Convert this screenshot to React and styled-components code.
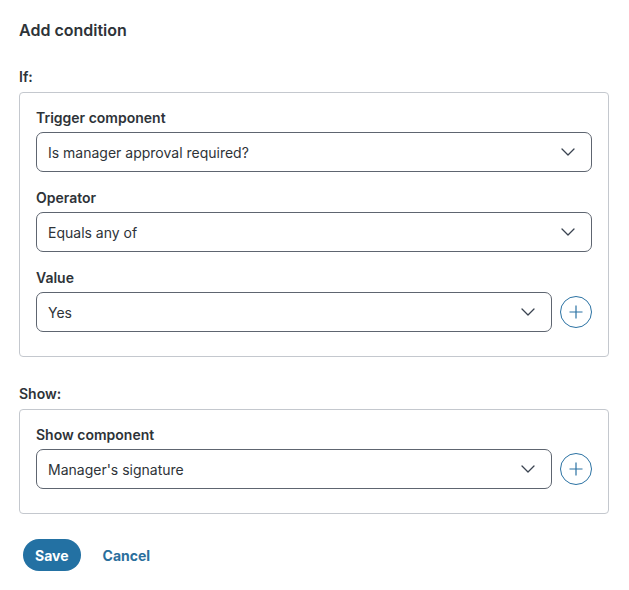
import React from 'react';
import styled, { createGlobalStyle } from 'styled-components';

const GlobalStyle = createGlobalStyle`
  body {
    margin: 0;
    background: #fff;
    font-family: Inter, "Noto Sans", sans-serif;
    color: #2e3338;
  }
`;

const Page = styled.div`
  width: 590px;
  padding: 20px 20px 20px 19px;
  box-sizing: content-box;
`;

const Title = styled.h2`
  margin: 0 0 27px;
  font-size: 16px;
  line-height: 20px;
  font-weight: 600;
`;

const SectionLabel = styled.div`
  font-size: 14px;
  line-height: 20px;
  font-weight: 600;
  margin-bottom: 5px;
`;

const Section = styled.div`
  border: 1px solid #c4c8ce;
  border-radius: 4px;
  padding: 15px 16px 24px;
  display: flex;
  flex-direction: column;
  gap: 16px;
  margin-bottom: ${(p) => (p.$last ? '25px' : '27px')};
`;

const Field = styled.div`
  display: flex;
  flex-direction: column;
  gap: 4px;
`;

const FieldLabel = styled.label`
  font-size: 14px;
  line-height: 20px;
  font-weight: 600;
`;

const Row = styled.div`
  display: flex;
  align-items: center;
  gap: 8px;
`;

const Select = styled.div`
  flex: 1;
  height: 40px;
  box-sizing: border-box;
  border: 1px solid #5e6570;
  border-radius: 7px;
  display: flex;
  align-items: center;
  justify-content: space-between;
  padding: 0 16px 0 11px;
  font-size: 14px;
  color: #2e3338;
`;

const AddButton = styled.button`
  width: 32px;
  height: 32px;
  border-radius: 50%;
  border: 1px solid #2b72a3;
  background: #fff;
  padding: 0;
  display: flex;
  align-items: center;
  justify-content: center;
  flex-shrink: 0;
`;

const Actions = styled.div`
  display: flex;
  align-items: center;
  gap: 22px;
  padding-left: 4px;
`;

const SaveButton = styled.button`
  height: 32px;
  padding: 0 12px;
  border: none;
  border-radius: 16px;
  background: #2371a3;
  color: #fff;
  font-family: inherit;
  font-size: 14px;
  font-weight: 700;
`;

const CancelButton = styled.button`
  border: none;
  background: none;
  padding: 0;
  color: #2b6f9d;
  font-family: inherit;
  font-size: 14px;
  font-weight: 700;
`;

const Chevron = () => (
  <svg width="14" height="8" viewBox="0 0 14 8" fill="none">
    <path d="M1 1l6 6 6-6" stroke="#3a4350" strokeWidth="1.3" strokeLinecap="round" strokeLinejoin="round" />
  </svg>
);

const Plus = () => (
  <svg width="14" height="14" viewBox="0 0 14 14" fill="none">
    <path d="M7 0.5v13M0.5 7h13" stroke="#2b72a3" strokeWidth="1.2" />
  </svg>
);

const SelectField = ({ label, value, addable }) => (
  <Field>
    <FieldLabel>{label}</FieldLabel>
    <Row>
      <Select>
        <span>{value}</span>
        <Chevron />
      </Select>
      {addable && (
        <AddButton aria-label="Add">
          <Plus />
        </AddButton>
      )}
    </Row>
  </Field>
);

const App = () => {
  return (
    <Page>
      <GlobalStyle />
      <Title>Add condition</Title>

      <SectionLabel>If:</SectionLabel>
      <Section>
        <SelectField label="Trigger component" value="Is manager approval required?" />
        <SelectField label="Operator" value="Equals any of" />
        <SelectField label="Value" value="Yes" addable />
      </Section>

      <SectionLabel>Show:</SectionLabel>
      <Section $last>
        <SelectField label="Show component" value="Manager's signature" addable />
      </Section>

      <Actions>
        <SaveButton>Save</SaveButton>
        <CancelButton>Cancel</CancelButton>
      </Actions>
    </Page>
  );
};

export default App;
